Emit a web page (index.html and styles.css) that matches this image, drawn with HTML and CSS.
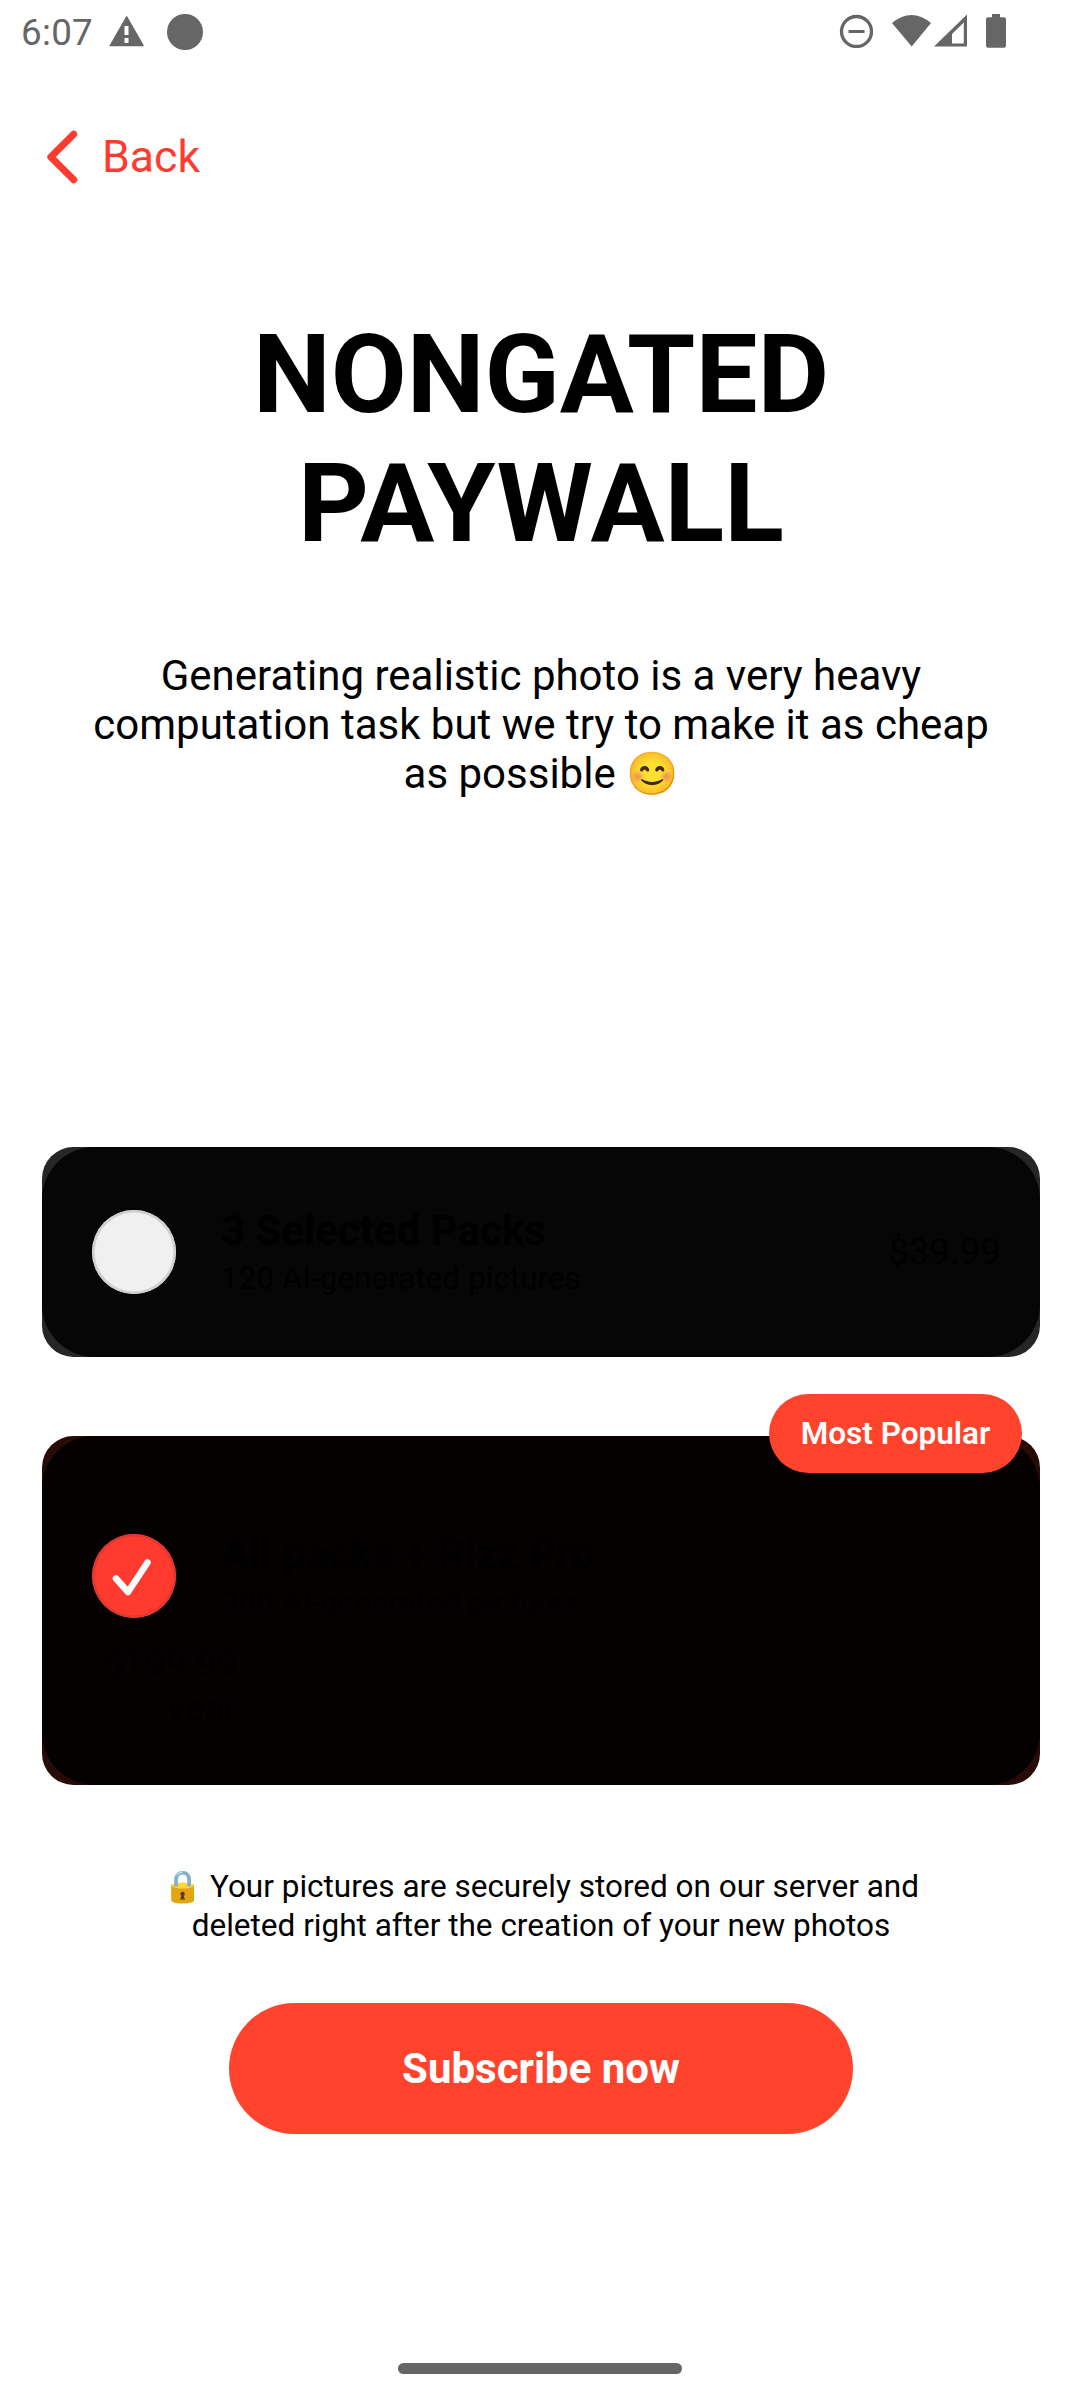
FILE: index.html
```html
<!DOCTYPE html>
<html lang="en">
<head>
<meta charset="utf-8">
<title>Paywall</title>
<link rel="stylesheet" href="styles.css">
</head>
<body>
<div class="screen">
  <div class="status-bar">
    <span class="clock">6:07</span>
    <svg class="icon-warning" width="36" height="32" viewBox="0 0 36 32"><path fill-rule="evenodd" d="M17 .7q.7-1.2 1.4 0L34.6 29q.6 1.3-.8 1.3H1.6Q.2 30.300.800 29zM15.500 10v9h4v-9zM15.500 22v5h4v-5z"/></svg>
    <span class="dot"></span>
    <svg class="status-icons" width="170" height="36" viewBox="0 0 170 36">
      <circle cx="18.500" cy="19.500" r="15" fill="none" stroke="#666" stroke-width="3.300"/>
      <path d="M10.500 18h16v3h-16z"/>
      <path d="M54 11Q73.500-5 93 11L73.700 34.500z"/>
      <path fill-rule="evenodd" d="M129 2.500v32H96zM125.800 10.500L114 22v9.500h11.800z"/>
      <path d="M154 2h8v3.200h4q2 0 2 2v26.500q0 2-2 2h-16q-2 0-2-2V7.200q0-2 2-2h4z"/>
    </svg>
  </div>
  <div class="back">
    <svg width="32" height="54" viewBox="0 0 32 54"><path d="M27.700 4.300L4.800 27l22.900 22.700" fill="none" stroke="#ff3b30" stroke-width="7" stroke-linecap="round" stroke-linejoin="round"/></svg>
    <span class="back-label">Back</span>
  </div>
  <div class="content">
    <h1 class="title">NONGATED<br>PAYWALL</h1>
    <p class="description">Generating realistic photo is a very heavy<br>computation task but we try to make it as cheap<br>as possible 😊</p>
    <div class="plans">
      <div class="plan plan-basic">
        <div class="plan-body">
          <div class="plan-row">
            <span class="radio"></span>
            <div class="plan-text">
              <div class="plan-name">3 Selected Packs</div>
              <div class="plan-detail">120 AI-generated pictures</div>
            </div>
            <div class="plan-price">$39.99</div>
          </div>
        </div>
      </div>
      <div class="plan plan-pro">
        <div class="plan-body">
          <div class="plan-row">
            <span class="radio checked"><svg width="84" height="84" viewBox="0 0 84 84"><path d="M24 44.500L36 58L55.500 28.500" fill="none" stroke="#fff" stroke-width="6.500" stroke-linecap="round" stroke-linejoin="round"/></svg></span>
            <div class="plan-text">
              <div class="plan-name">All packs + Rizz Pro</div>
              <div class="plan-detail">300 AI-generated pictures</div>
            </div>
          </div>
          <div class="year-price">$199.99<br>year</div>
        </div>
        <div class="badge">Most Popular</div>
      </div>
    </div>
    <p class="note">🔒 Your pictures are securely stored on our server and<br>deleted right after the creation of your new photos</p>
    <button class="subscribe">Subscribe now</button>
  </div>
  <div class="home-indicator"></div>
</div>
</body>
</html>
```
FILE: styles.css
```css
* { box-sizing: border-box; }
body { margin: 0; background: #fff; font-family: Roboto, "Noto Color Emoji", sans-serif; color: #000; }
.screen { width: 1080px; height: 2400px; overflow: hidden; display: flex; flex-direction: column; align-items: center; }
.status-bar { align-self: stretch; height: 63px; padding: 0 72px 0 21px; display: flex; align-items: flex-start; color: #666; fill: #666; }
.clock { width: 88px; font-size: 36.750px; line-height: 43px; padding-top: 11px; letter-spacing: .3px; }
.icon-warning { margin-top: 16px; }
.dot { width: 36px; height: 36px; margin: 14px 0 0 22px; border-radius: 50%; background: #666; }
.status-icons { margin: 12px 0 0 auto; }
.back { align-self: stretch; height: 187px; padding: 67px 0 0 46px; display: flex; gap: 24px; color: #ff3b30; }
.back-label { font-size: 44.600px; line-height: 54px; }
.content { align-self: stretch; padding-left: 2px; display: flex; flex-direction: column; align-items: center; }
.title { margin: 60px 0 0; font-size: 110.250px; line-height: 129px; font-weight: 700; text-align: center; }
.description { margin: 83px 0 0; font-size: 42px; line-height: 49px; text-align: center; }
.plans { margin-top: 349px; width: 998px; display: flex; flex-direction: column; gap: 79px; }
.plan { position: relative; border-radius: 31.500px; }
.plan-basic { height: 210px; background: #262626; }
.plan-pro { height: 349px; background: #260b06; }
.plan-body { height: 100%; border-radius: 52.500px; background: #060606; padding: 63px 39px 0 50px; }
.plan-pro .plan-body { background: #050100; padding-top: 98px; }
.plan-row { display: flex; align-items: center; height: 84px; }
.radio { width: 84px; height: 84px; border-radius: 50%; background: #f0f0f0; box-shadow: inset 0 0 0 2.600px #d1cfcf; }
.checked { background: #ff3b30; box-shadow: inset 0 0 0 2.600px #df3830; }
.radio svg { display: block; }
.plan-text { flex: 1; padding: 0 0 1px 45px; }
.plan-name { font-size: 42px; line-height: 49px; font-weight: 700; }
.plan-detail { margin-top: 5px; font-size: 31.500px; line-height: 37px; }
.plan-price { margin-top: -1px; font-size: 36.750px; line-height: 43px; }
.year-price { width: 145px; margin-top: 23px; font-size: 36.750px; line-height: 45px; text-align: right; }
.badge { position: absolute; right: 18px; top: -42px; width: 253px; height: 79px; border-radius: 40px; background: #ff432c; color: #fff; font-size: 31.500px; font-weight: 600; line-height: 79px; text-align: center; }
.note { margin: 82px 0 0; font-size: 31.500px; line-height: 39px; text-align: center; }
.subscribe { margin-top: 58px; width: 624px; height: 131px; border: 0; border-radius: 66px; padding: 0; background: #ff432c; color: #fff; font: 700 42px/129px Roboto, sans-serif; }
.home-indicator { margin-top: 229px; width: 284px; height: 11px; border-radius: 5.500px; background: #666; }
```
